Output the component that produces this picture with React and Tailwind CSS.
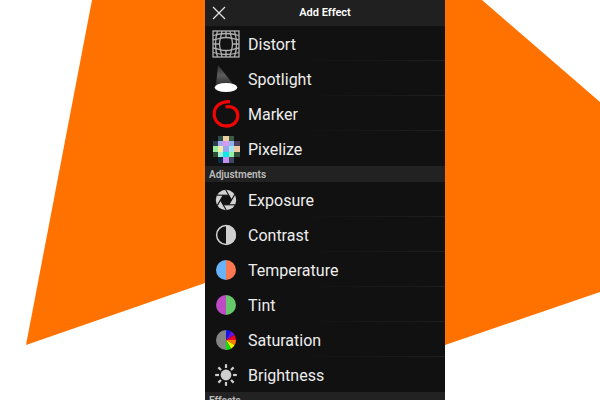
import React from 'react';

function DistortIcon() {
  return (
    <svg viewBox="0 0 28 28" className="size-7" fill="none" stroke="#b0b0b0" strokeWidth="1.3" aria-hidden="true">
      <rect x="1" y="1" width="26" height="26" />
      <path d="M5.500 1Q1.500 14 5.500 27M10 1C9.500 6 7.500 9 7.500 14S9.500 22 10 27M14 1V7.500M14 20.500V27M18 1C18.500 6 20.500 9 20.500 14S18.500 22 18 27M22.500 1Q26.500 14 22.500 27" />
      <path d="M1 5.500Q14 1.500 27 5.500M1 10C6 9.500 9 7.500 14 7.500S22 9.500 27 10M1 14H7.500M20.500 14H27M1 18C6 18.500 9 20.500 14 20.500S22 18.500 27 18M1 22.500Q14 26.500 27 22.500" />
    </svg>
  );
}

function SpotlightIcon() {
  return (
    <svg viewBox="0 0 28 28" className="size-7" aria-hidden="true">
      <defs>
        <linearGradient id="beam" x1="0" y1="0" x2="0" y2="1">
          <stop offset="0" stopColor="#2c2c2c" />
          <stop offset="0.5" stopColor="#5c5c5c" />
          <stop offset="1" stopColor="#303030" />
        </linearGradient>
      </defs>
      <path d="M6 0L21 19L4 20Z" fill="url(#beam)" />
      <ellipse cx="14" cy="22.5" rx="11.3" ry="4.6" fill="#fff" />
    </svg>
  );
}

function MarkerIcon() {
  return (
    <svg viewBox="0 0 28 28" className="size-7" fill="none" stroke="#ee0505" strokeWidth="3.3" strokeLinejoin="round" aria-hidden="true">
      <path d="M18 1.700C8 1.500 2.200 6.500 2.200 14C2.200 21 7.500 26 14.500 26C21.500 26 25.800 21.500 25.800 15.500C25.800 9.500 20.500 5.500 13.500 7" />
    </svg>
  );
}

const PIXELS = [
  ['#111111', '#2b4a48', '#ecd0a0', '#3b5c42', '#111111'],
  ['#26404e', '#a4a8ee', '#d69af0', '#8fb4ee', '#4c4060'],
  ['#98ee98', '#eeeea8', '#98a8f0', '#a0e8ee', '#eec8a0'],
  ['#2c4a34', '#a0eed0', '#10e6ee', '#94eea4', '#2f5038'],
  ['#111111', '#0c2c48', '#c690f0', '#404860', '#111111'],
];

function PixelizeIcon() {
  return (
    <svg viewBox="0 0 28 28" className="size-7" shapeRendering="crispEdges" aria-hidden="true">
      {PIXELS.map((row, y) =>
        row.map((color, x) => (
          <rect key={`${x}-${y}`} x={x * 5.4 + 0.5} y={y * 5.4 + 0.5} width="5.4" height="5.4" fill={color} />
        ))
      )}
    </svg>
  );
}

function ExposureIcon() {
  return (
    <svg viewBox="0 0 28 28" className="size-7" aria-hidden="true">
      <circle cx="14" cy="14" r="10.2" fill="#d2d2d2" />
      <path d="M11.200 9.200H16.800L19.600 14L16.800 18.800H11.200L8.400 14Z" fill="#111" />
      {[0, 60, 120, 180, 240, 300].map((a) => (
        <path key={a} d="M16.800 9.200H5" stroke="#111" strokeWidth="1.1" transform={`rotate(${a} 14 14)`} />
      ))}
    </svg>
  );
}

function ContrastIcon() {
  return (
    <svg viewBox="0 0 28 28" className="size-7" aria-hidden="true">
      <circle cx="14" cy="14" r="9.4" fill="#111" stroke="#cfcfcf" strokeWidth="1.5" />
      <path d="M14 4A10 10 0 0 1 14 24Z" fill="#cfcfcf" />
    </svg>
  );
}

function SplitIcon({ left, right }) {
  return (
    <svg viewBox="0 0 28 28" className="size-7" aria-hidden="true">
      <path d="M14 4A10 10 0 0 0 14 24Z" fill={left} />
      <path d="M14 4A10 10 0 0 1 14 24Z" fill={right} />
    </svg>
  );
}

const WHEEL = ['#1515f0', '#6a12e0', '#f00820', '#ff7a00', '#f4f000', '#10e010'];

function SaturationIcon() {
  return (
    <svg viewBox="0 0 28 28" className="size-7" aria-hidden="true">
      <path d="M14 4A10 10 0 0 0 14 24Z" fill="#858585" />
      {WHEEL.map((c, i) => (
        <path key={c} d="M14 14V4A10 10 0 0 1 19 5.340Z" fill={c} transform={`rotate(${i * 30} 14 14)`} />
      ))}
    </svg>
  );
}

function BrightnessIcon() {
  return (
    <svg viewBox="0 0 28 28" className="size-7" aria-hidden="true">
      <circle cx="14" cy="14" r="5.4" fill="#cecece" />
      {[0, 45, 90, 135, 180, 225, 270, 315].map((a) => (
        <path key={a} d="M14 7V3.200" stroke="#cecece" strokeWidth="2.2" transform={`rotate(${a} 14 14)`} />
      ))}
    </svg>
  );
}

const TOOLS = [
  ['Distort', <DistortIcon />],
  ['Spotlight', <SpotlightIcon />],
  ['Marker', <MarkerIcon />],
  ['Pixelize', <PixelizeIcon />],
];

const ADJUSTMENTS = [
  ['Exposure', <ExposureIcon />],
  ['Contrast', <ContrastIcon />],
  ['Temperature', <SplitIcon left="#68b4fa" right="#fb7850" />],
  ['Tint', <SplitIcon left="#bd4cc4" right="#66c86a" />],
  ['Saturation', <SaturationIcon />],
  ['Brightness', <BrightnessIcon />],
];

function EffectList({ items }) {
  return (
    <ul>
      {items.map(([name, icon]) => (
        <li key={name} className="group">
          <button type="button" className="flex h-[34px] w-full items-center gap-2 px-[7px] pt-0.5 text-left text-base text-[#ededed]">
            {icon}
            <span className="pt-0.5">{name}</span>
          </button>
          <div className="h-px bg-linear-to-r from-transparent from-40% to-[#1f1f1f] group-last:invisible" />
        </li>
      ))}
    </ul>
  );
}

function SectionTitle({ children }) {
  return <h2 className="h-4 bg-[#222] px-1 text-[10px] leading-[18px] font-semibold text-[#bdbdbd]">{children}</h2>;
}

export default function App() {
  return (
    <div className="flex h-screen overflow-hidden bg-white font-[Roboto,sans-serif]">
      <div className="min-w-0 flex-[205]">
        <svg viewBox="0 0 205 400" preserveAspectRatio="none" className="size-full" aria-hidden="true">
          <path d="M92 0H205V283L26 345Z" fill="#ff7200" />
        </svg>
      </div>
      <main className="w-60 shrink-0 overflow-hidden bg-[#111]">
        <header className="grid h-[26px] grid-cols-[28px_1fr_28px] items-center bg-[#202020]">
          <button type="button" aria-label="Close" className="flex justify-center">
            <svg viewBox="0 0 14 14" className="size-3.5" stroke="#e4e4e4" strokeWidth="1.2" aria-hidden="true">
              <path d="M1 1L13 13M13 1L1 13" />
            </svg>
          </button>
          <h1 className="pt-px text-center text-[11px] font-semibold text-white">Add Effect</h1>
        </header>
        <EffectList items={TOOLS} />
        <SectionTitle>Adjustments</SectionTitle>
        <EffectList items={ADJUSTMENTS} />
        <SectionTitle>Effects</SectionTitle>
      </main>
      <div className="min-w-0 flex-[155]">
        <svg viewBox="0 0 155 400" preserveAspectRatio="none" className="size-full" aria-hidden="true">
          <path d="M0 0H37L155 102V292L0 345Z" fill="#ff7200" />
        </svg>
      </div>
    </div>
  );
}
